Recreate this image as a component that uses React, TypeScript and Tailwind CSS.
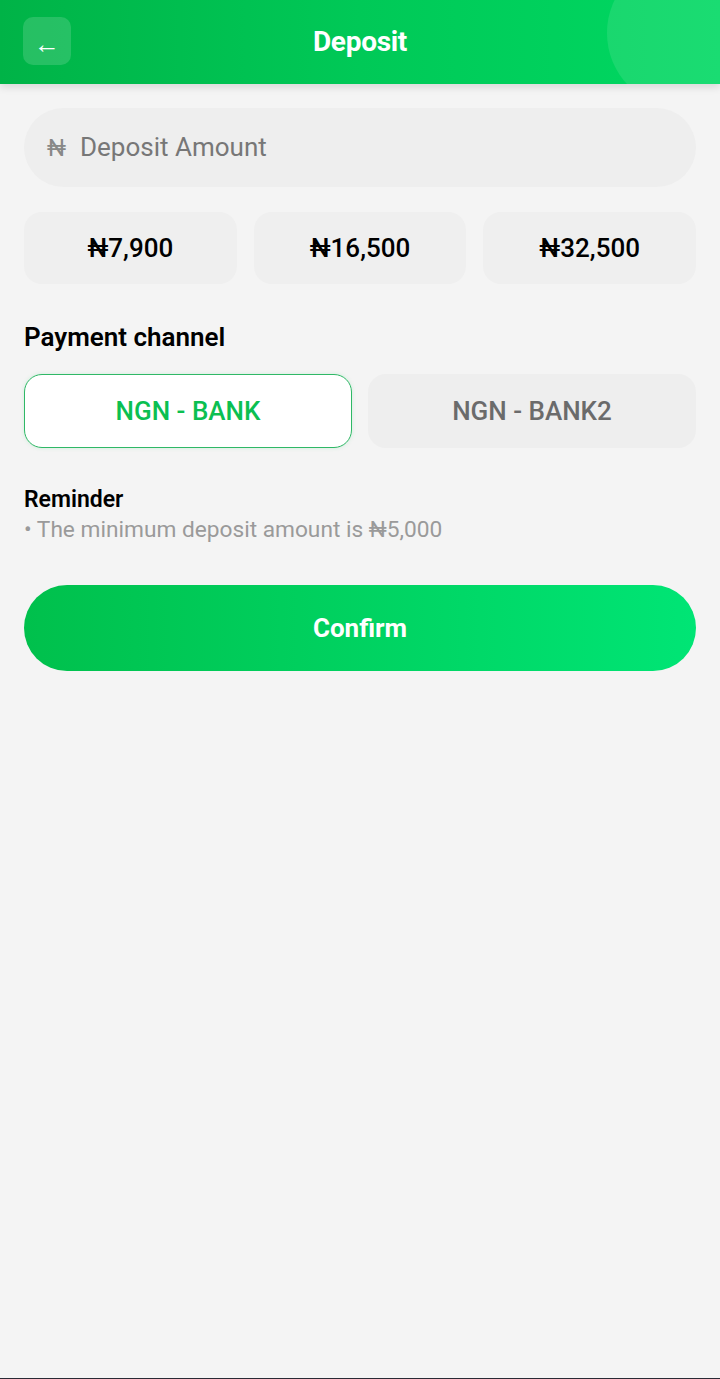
const amounts = ["₦7,900", "₦16,500", "₦32,500"];
const channels = ["NGN - BANK", "NGN - BANK2"];

export default function App() {
  return (
    <div className="flex min-h-[1379px] flex-col bg-[#f4f4f4] font-['Roboto',sans-serif]">
      <header className="relative z-10 flex h-[84px] items-center justify-center overflow-hidden bg-gradient-to-r from-[#00b347] via-[#00c957] to-[#00d862] shadow-[0_3px_8px_rgba(0,0,0,0.12)]">
        <div className="absolute right-[-37px] top-[-42px] h-[150px] w-[150px] rounded-full bg-white/10" />
        <button className="absolute left-[23px] top-[17px] flex h-[48px] w-[48px] items-end justify-center rounded-[10px] bg-white/15 pb-[8px] text-[26px] leading-none text-white">
          ←
        </button>
        <h1 className="text-[28px] font-bold tracking-[-0.3px] text-white">Deposit</h1>
      </header>

      <main className="flex flex-col px-[24px] pt-[24px]">
        <div className="flex h-[79px] items-center gap-[14px] rounded-full bg-[#eeeeee] px-[23px] text-[#888]">
          <span className="text-[24px]">₦</span>
          <span className="text-[26px] text-[#777]">Deposit Amount</span>
        </div>

        <div className="mt-[25px] grid grid-cols-3 gap-[17px]">
          {amounts.map((a) => (
            <div
              key={a}
              className="flex h-[72px] items-center justify-center rounded-[18px] bg-[#efefef] text-[26px] font-medium text-black"
            >
              {a}
            </div>
          ))}
        </div>

        <h2 className="mt-[38px] text-[26px] font-semibold leading-[30px] text-black">Payment channel</h2>

        <div className="mt-[22px] grid grid-cols-2 gap-[16px]">
          {channels.map((c, i) => (
            <div
              key={c}
              className={
                i === 0
                  ? "flex h-[74px] items-center justify-center rounded-[18px] border border-[#2fb866] bg-white text-[26px] font-medium text-[#0bbf51] shadow-[0_0_4px_rgba(0,200,90,0.15)]"
                  : "flex h-[74px] items-center justify-center rounded-[18px] bg-[#eeeeee] text-[26px] font-medium text-[#6b6b6b]"
              }
            >
              {c}
            </div>
          ))}
        </div>

        <h3 className="mt-[38px] text-[23px] font-semibold leading-[28px] text-black">Reminder</h3>
        <p className="mt-[2px] text-[22.7px] leading-[28px] text-[#9a9a9a]">• The minimum deposit amount is ₦5,000</p>

        <button className="mt-[41px] flex h-[86px] items-center justify-center rounded-full bg-gradient-to-r from-[#00c04c] to-[#00e575] text-[26px] font-bold text-white">
          Confirm
        </button>
      </main>

      <div className="mt-auto h-[1px] bg-[#2a2a35]" />
    </div>
  );
}
